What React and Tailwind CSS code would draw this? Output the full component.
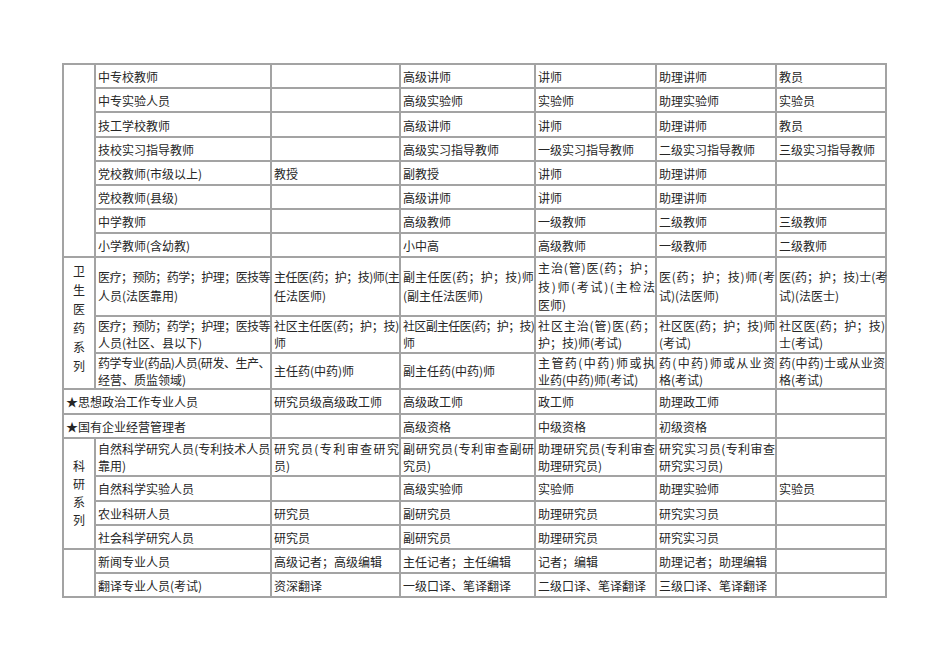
import React from "react";

const base =
  "border-2 border-[#a3a3a3] pl-[2px] pr-0 pb-0 align-middle text-left whitespace-nowrap";

function Lines({ lines }) {
  return lines.map((l, i) => {
    const o = typeof l === "string" ? { t: l, j: i < lines.length - 1 } : l;
    if (o.j)
      return (
        <div key={i} className={"flex justify-between whitespace-nowrap " + (o.c || "")}>
          {Array.from(o.t).map((ch, k) => (
            <span key={k}>{ch}</span>
          ))}
        </div>
      );
    return (
      <div key={i} className={"whitespace-nowrap " + (o.c || "")}>
        {o.t}
      </div>
    );
  });
}

function C({ children, lines, className = "", colSpan }) {
  return (
    <td colSpan={colSpan} className={base + " " + className}>
      {lines ? <Lines lines={lines} /> : children}
    </td>
  );
}

function Vert({ text, className = "" }) {
  return (
    <div className={"flex flex-col items-center " + className}>
      {Array.from(text).map((ch, i) => (
        <div key={i}>{ch}</div>
      ))}
    </div>
  );
}

const one = "h-[24px] leading-[18px] [&>td]:pt-[2px]";

export default function App() {
  return (
    <div className="w-[950px] h-[672px] bg-white overflow-hidden pl-[62px] pt-[63px] font-['Noto_Sans_CJK_SC','Noto_Sans_CJK_JP',sans-serif] text-[12px] text-[#262626]">
      <table className="table-fixed border-collapse w-[823px]">
        <colgroup>
          <col className="w-[32px]" />
          <col className="w-[176px]" />
          <col className="w-[129px]" />
          <col className="w-[135px]" />
          <col className="w-[121px]" />
          <col className="w-[120px]" />
          <col className="w-[110px]" />
        </colgroup>
        <tbody>
          {/* Section 1 */}
          <tr className={one}>
            <td rowSpan={8} className="border-2 border-[#a3a3a3]"></td>
            <C>中专校教师</C>
            <C></C>
            <C>高级讲师</C>
            <C>讲师</C>
            <C>助理讲师</C>
            <C>教员</C>
          </tr>
          <tr className={one}>
            <C>中专实验人员</C>
            <C></C>
            <C>高级实验师</C>
            <C>实验师</C>
            <C>助理实验师</C>
            <C>实验员</C>
          </tr>
          <tr className="h-[25px] leading-[18px] [&>td]:pt-[2px]">
            <C>技工学校教师</C>
            <C></C>
            <C>高级讲师</C>
            <C>讲师</C>
            <C>助理讲师</C>
            <C>教员</C>
          </tr>
          <tr className={one}>
            <C>技校实习指导教师</C>
            <C></C>
            <C>高级实习指导教师</C>
            <C>一级实习指导教师</C>
            <C>二级实习指导教师</C>
            <C>三级实习指导教师</C>
          </tr>
          <tr className={one}>
            <C>党校教师(市级以上)</C>
            <C>教授</C>
            <C>副教授</C>
            <C>讲师</C>
            <C>助理讲师</C>
            <C></C>
          </tr>
          <tr className={one}>
            <C>党校教师(县级)</C>
            <C></C>
            <C>高级讲师</C>
            <C>讲师</C>
            <C>助理讲师</C>
            <C></C>
          </tr>
          <tr className={one}>
            <C>中学教师</C>
            <C></C>
            <C>高级教师</C>
            <C>一级教师</C>
            <C>二级教师</C>
            <C>三级教师</C>
          </tr>
          <tr className={one}>
            <C>小学教师(含幼教)</C>
            <C></C>
            <C>小中高</C>
            <C>高级教师</C>
            <C>一级教师</C>
            <C>二级教师</C>
          </tr>

          {/* Section 2 */}
          <tr className="h-[58px] leading-[18.5px] [&>td]:pt-[1px]">
            <td rowSpan={3} className="border-2 border-[#a3a3a3] align-middle pb-[10px] leading-[19px]">
              <Vert text="卫生医药系列" />
            </td>
            <C lines={[{ t: "医疗；预防；药学；护理；医技等", j: true, c: "tracking-[-0.6px]" }, "人员(法医靠用)"]} />
            <C lines={[{ t: "主任医(药；护；技)师(主", j: true, c: "tracking-[-0.95px]" }, "任法医师)"]} />
            <C lines={["副主任医(药；护；技)师", "(副主任法医师)"]} />
            <C lines={["主治(管)医(药；护；", "技)师(考试)(主检法", "医师)"]} />
            <C lines={["医(药；护；技)师(考", "试)(法医师)"]} />
            <C lines={["医(药；护；技)士(考", "试)(法医士)"]} />
          </tr>
          <tr className="h-[37px] leading-[17px] [&>td]:pt-0">
            <C lines={[{ t: "医疗；预防；药学；护理；医技等", j: true, c: "tracking-[-0.6px]" }, "人员(社区、县以下)"]} />
            <C lines={[{ t: "社区主任医(药；护；技)", j: true, c: "tracking-[-0.3px]" }, "师"]} />
            <C lines={[{ t: "社区副主任医(药；护；技)", j: true, c: "tracking-[-0.7px]" }, "师"]} />
            <C lines={["社区主治(管)医(药；", "护；技)师(考试)"]} />
            <C lines={["社区医(药；护；技)师", "(考试)"]} />
            <C lines={["社区医(药；护；技)", "士(考试)"]} />
          </tr>
          <tr className="h-[36px] leading-[17px] [&>td]:pt-0">
            <C lines={[{ t: "药学专业(药品)人员(研发、生产、", j: true, c: "tracking-[-0.6px]" }, "经营、质监领域)"]} />
            <C>主任药(中药)师</C>
            <C>副主任药(中药)师</C>
            <C lines={["主管药(中药)师或执", "业药(中药)师(考试)"]} />
            <C lines={["药(中药)师或从业资", "格(考试)"]} />
            <C lines={["药(中药)士或从业资", "格(考试)"]} />
          </tr>
          <tr className="h-[25px] leading-[18px] [&>td]:pt-[2px]">
            <C colSpan={2}>★思想政治工作专业人员</C>
            <C>研究员级高级政工师</C>
            <C>高级政工师</C>
            <C>政工师</C>
            <C>助理政工师</C>
            <C></C>
          </tr>
          <tr className={one}>
            <C colSpan={2}>★国有企业经营管理者</C>
            <C></C>
            <C>高级资格</C>
            <C>中级资格</C>
            <C>初级资格</C>
            <C></C>
          </tr>

          {/* Section 3 */}
          <tr className="h-[38px] leading-[17px] [&>td]:pt-0">
            <td rowSpan={4} className="border-2 border-[#a3a3a3] align-middle pt-[4px] leading-[18px]">
              <Vert text="科研系列" />
            </td>
            <C lines={[{ t: "自然科学研究人员(专利技术人员", j: true, c: "tracking-[-0.3px]" }, "靠用)"]} />
            <C lines={["研究员(专利审查研究", "员)"]} />
            <C lines={[{ t: "副研究员(专利审查副研", j: true, c: "tracking-[-0.2px]" }, "究员)"]} />
            <C lines={["助理研究员(专利审查", "助理研究员)"]} />
            <C lines={["研究实习员(专利审查", "研究实习员)"]} />
            <C></C>
          </tr>
          <tr className="h-[25px] leading-[18px] [&>td]:pt-[2px]">
            <C>自然科学实验人员</C>
            <C></C>
            <C>高级实验师</C>
            <C>实验师</C>
            <C>助理实验师</C>
            <C>实验员</C>
          </tr>
          <tr className={one}>
            <C>农业科研人员</C>
            <C>研究员</C>
            <C>副研究员</C>
            <C>助理研究员</C>
            <C>研究实习员</C>
            <C></C>
          </tr>
          <tr className={one}>
            <C>社会科学研究人员</C>
            <C>研究员</C>
            <C>副研究员</C>
            <C>助理研究员</C>
            <C>研究实习员</C>
            <C></C>
          </tr>

          {/* Section 4 */}
          <tr className={one}>
            <td rowSpan={2} className="border-2 border-[#a3a3a3]"></td>
            <C>新闻专业人员</C>
            <C>高级记者；高级编辑</C>
            <C>主任记者；主任编辑</C>
            <C>记者；编辑</C>
            <C>助理记者；助理编辑</C>
            <C></C>
          </tr>
          <tr className={one}>
            <C>翻译专业人员(考试)</C>
            <C>资深翻译</C>
            <C>一级口译、笔译翻译</C>
            <C>二级口译、笔译翻译</C>
            <C>三级口译、笔译翻译</C>
            <C></C>
          </tr>
        </tbody>
      </table>
    </div>
  );
}
